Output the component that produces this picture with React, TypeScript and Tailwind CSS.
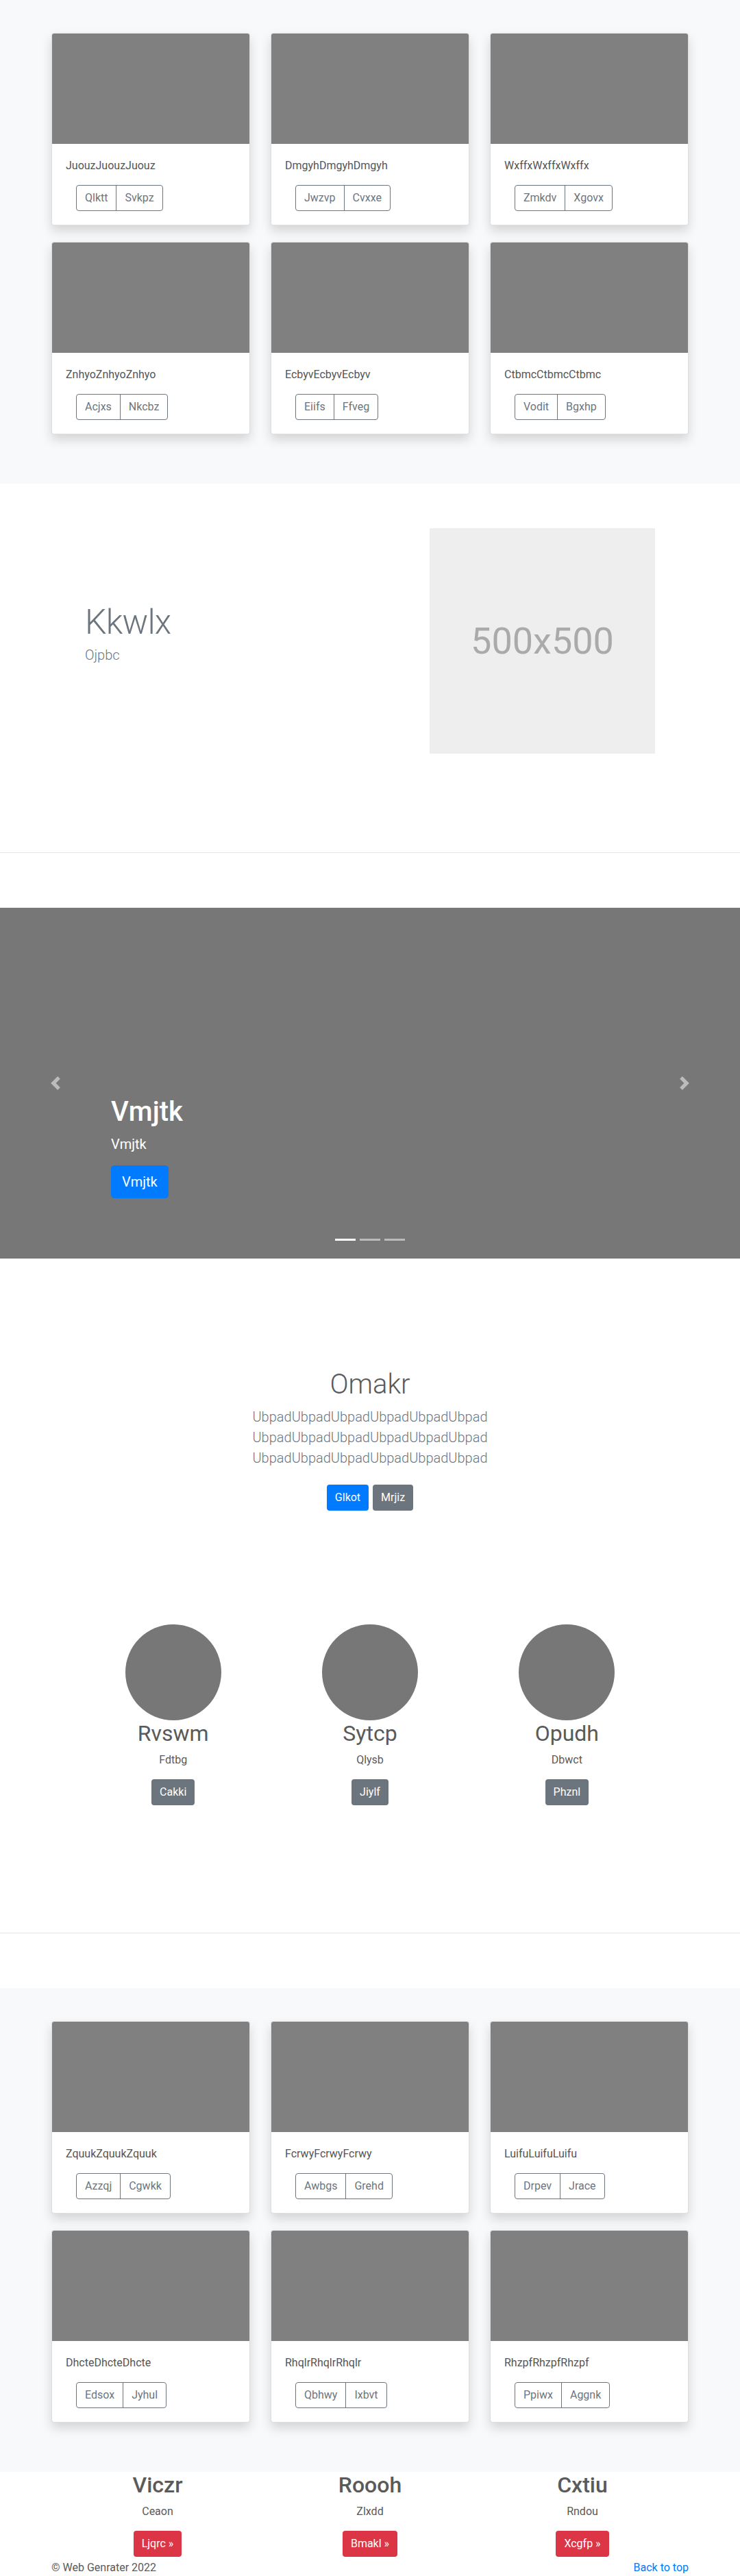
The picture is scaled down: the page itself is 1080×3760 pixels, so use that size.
import React from "react";

interface AlbumCard {
  label: string;
  actions: [string, string];
}

interface MarketingItem {
  title: string;
  text: string;
  action: string;
}

const albumOne: AlbumCard[] = [
  { label: "JuouzJuouzJuouz", actions: ["Qlktt", "Svkpz"] },
  { label: "DmgyhDmgyhDmgyh", actions: ["Jwzvp", "Cvxxe"] },
  { label: "WxffxWxffxWxffx", actions: ["Zmkdv", "Xgovx"] },
  { label: "ZnhyoZnhyoZnhyo", actions: ["Acjxs", "Nkcbz"] },
  { label: "EcbyvEcbyvEcbyv", actions: ["Eiifs", "Ffveg"] },
  { label: "CtbmcCtbmcCtbmc", actions: ["Vodit", "Bgxhp"] },
];

const albumTwo: AlbumCard[] = [
  { label: "ZquukZquukZquuk", actions: ["Azzqj", "Cgwkk"] },
  { label: "FcrwyFcrwyFcrwy", actions: ["Awbgs", "Grehd"] },
  { label: "LuifuLuifuLuifu", actions: ["Drpev", "Jrace"] },
  { label: "DhcteDhcteDhcte", actions: ["Edsox", "Jyhul"] },
  { label: "RhqlrRhqlrRhqlr", actions: ["Qbhwy", "Ixbvt"] },
  { label: "RhzpfRhzpfRhzpf", actions: ["Ppiwx", "Aggnk"] },
];

const marketing: MarketingItem[] = [
  { title: "Rvswm", text: "Fdtbg", action: "Cakki" },
  { title: "Sytcp", text: "Qlysb", action: "Jiylf" },
  { title: "Opudh", text: "Dbwct", action: "Phznl" },
];

const footerCols: MarketingItem[] = [
  { title: "Viczr", text: "Ceaon", action: "Ljqrc »" },
  { title: "Roooh", text: "Zlxdd", action: "Bmakl »" },
  { title: "Cxtiu", text: "Rndou", action: "Xcgfp »" },
];

const AlbumSection = ({ cards }: { cards: AlbumCard[] }) => {
  return (
    <section className="bg-[#f8f9fa] pt-12 pb-12">
      <div className="mx-auto grid w-[930px] grid-cols-3 gap-x-[30px]">
        {cards.map((card) => (
          <div
            key={card.label}
            className="mb-6 overflow-hidden rounded border border-black/[0.125] bg-white shadow-[0_8px_16px_rgba(0,0,0,0.15)]"
          >
            <div className="h-[161px] bg-[#808080]" />
            <div className="p-5">
              <p className="text-base leading-6 text-[#555]">{card.label}</p>
              <div className="mt-4 ml-[15px] flex w-fit rounded border border-[#6c757d] text-[#6c757d]">
                <button className="h-9 px-3 text-base leading-6">{card.actions[0]}</button>
                <button className="h-9 border-l border-[#6c757d] px-3 text-base leading-6">
                  {card.actions[1]}
                </button>
              </div>
            </div>
          </div>
        ))}
      </div>
    </section>
  );
};

const ChevronIcon = ({ dir }: { dir: "left" | "right" }) => (
  <svg width="20" height="20" viewBox="0 0 8 8" fill="#fff">
    {dir === "left" ? (
      <path d="M5.25 0l-4 4 4 4 1.5-1.5L4.25 4l2.5-2.5L5.25 0z" />
    ) : (
      <path d="M2.75 0l-1.5 1.5L3.75 4l-2.5 2.5L2.75 8l4-4-4-4z" />
    )}
  </svg>
);

const Carousel = () => {
  return (
    <section className="relative h-[512px] bg-[#777]">
      <div className="absolute inset-y-0 left-0 flex w-[15%] items-center justify-center opacity-50">
        <ChevronIcon dir="left" />
      </div>
      <div className="absolute inset-y-0 right-0 flex w-[15%] items-center justify-center opacity-50">
        <ChevronIcon dir="right" />
      </div>
      <div className="absolute right-[15%] bottom-[52px] left-[15%] py-5 text-white">
        <h1 className="mb-2 text-[40px] leading-[48px] font-medium">Vmjtk</h1>
        <p className="mb-4 text-xl leading-[30px]">Vmjtk</p>
        <p className="mb-4">
          <a className="inline-block rounded-[5px] bg-[#007bff] px-4 py-[9px] text-xl leading-[30px]">Vmjtk</a>
        </p>
      </div>
      <div className="absolute right-0 bottom-[26px] left-0 flex justify-center gap-[6px]">
        <span className="h-[3px] w-[30px] bg-white" />
        <span className="h-[3px] w-[30px] bg-white/50" />
        <span className="h-[3px] w-[30px] bg-white/50" />
      </div>
    </section>
  );
};

export default function App() {
  return (
    <div className="min-h-[3760px] bg-white font-[Roboto,'Liberation_Sans',sans-serif] text-[#5a5a5a]">
      <AlbumSection cards={albumOne} />

      {/* featurette */}
      <section className="bg-white pt-[65px]">
        <div className="mx-auto flex w-[832px] justify-between">
          <div className="pt-[112px]">
            <h2 className="mb-2 text-[50px] leading-none font-light tracking-[-0.8px] text-[#6c757d]">Kkwlx</h2>
            <p className="text-xl leading-[30px] font-light text-[#6c757d]">Ojpbc</p>
          </div>
          <div className="flex h-[329px] w-[329px] items-center justify-center bg-[#eee] text-[54px] text-[#aaa]">
            500x500
          </div>
        </div>
        <hr className="mt-[144px] mb-20 border-t border-black/10" />
      </section>

      <Carousel />

      {/* jumbotron */}
      <section className="pt-[160px] pb-12 text-center">
        <h1 className="mb-2 text-[40px] leading-[48px] font-light">Omakr</h1>
        <p className="mx-auto mb-4 max-w-[610px] text-xl leading-[30px] font-light text-[#6c757d]">
          UbpadUbpadUbpadUbpadUbpadUbpad UbpadUbpadUbpadUbpadUbpadUbpad UbpadUbpadUbpadUbpadUbpadUbpad
        </p>
        <div className="flex justify-center gap-1.5">
          <a className="my-2 rounded bg-[#007bff] px-3 py-[7px] text-base leading-6 text-white">Glkot</a>
          <a className="my-2 rounded bg-[#6c757d] px-3 py-[7px] text-base leading-6 text-white">Mrjiz</a>
        </div>
      </section>

      {/* marketing */}
      <section className="pt-[110px] pb-[186px]">
        <div className="mx-auto grid w-[862px] grid-cols-3 text-center">
          {marketing.map((item) => (
            <div key={item.title} className="flex flex-col items-center">
              <div className="h-[140px] w-[140px] rounded-full bg-[#777]" />
              <h2 className="mb-2 text-[32px] leading-[38px]">{item.title}</h2>
              <p className="mb-4 text-base leading-6">{item.text}</p>
              <a className="rounded bg-[#6c757d] px-3 py-[7px] text-base leading-6 text-white">{item.action}</a>
            </div>
          ))}
        </div>
      </section>

      <hr className="mb-20 border-t border-black/10" />

      <AlbumSection cards={albumTwo} />

      {/* footer */}
      <footer>
        <div className="mx-auto grid w-[930px] grid-cols-3 text-center">
          {footerCols.map((col) => (
            <div key={col.title} className="flex flex-col items-center">
              <h2 className="mb-2 text-[32px] leading-[38px] font-medium">{col.title}</h2>
              <p className="mb-4 text-base leading-6">{col.text}</p>
              <a className="rounded bg-[#dc3545] px-3 py-[7px] text-base leading-6 text-white">{col.action}</a>
            </div>
          ))}
        </div>
        <div className="mx-auto mt-1 flex w-[930px] justify-between text-base leading-6">
          <p>© Web Genrater 2022</p>
          <a className="text-[#007bff]">Back to top</a>
        </div>
      </footer>
    </div>
  );
}
